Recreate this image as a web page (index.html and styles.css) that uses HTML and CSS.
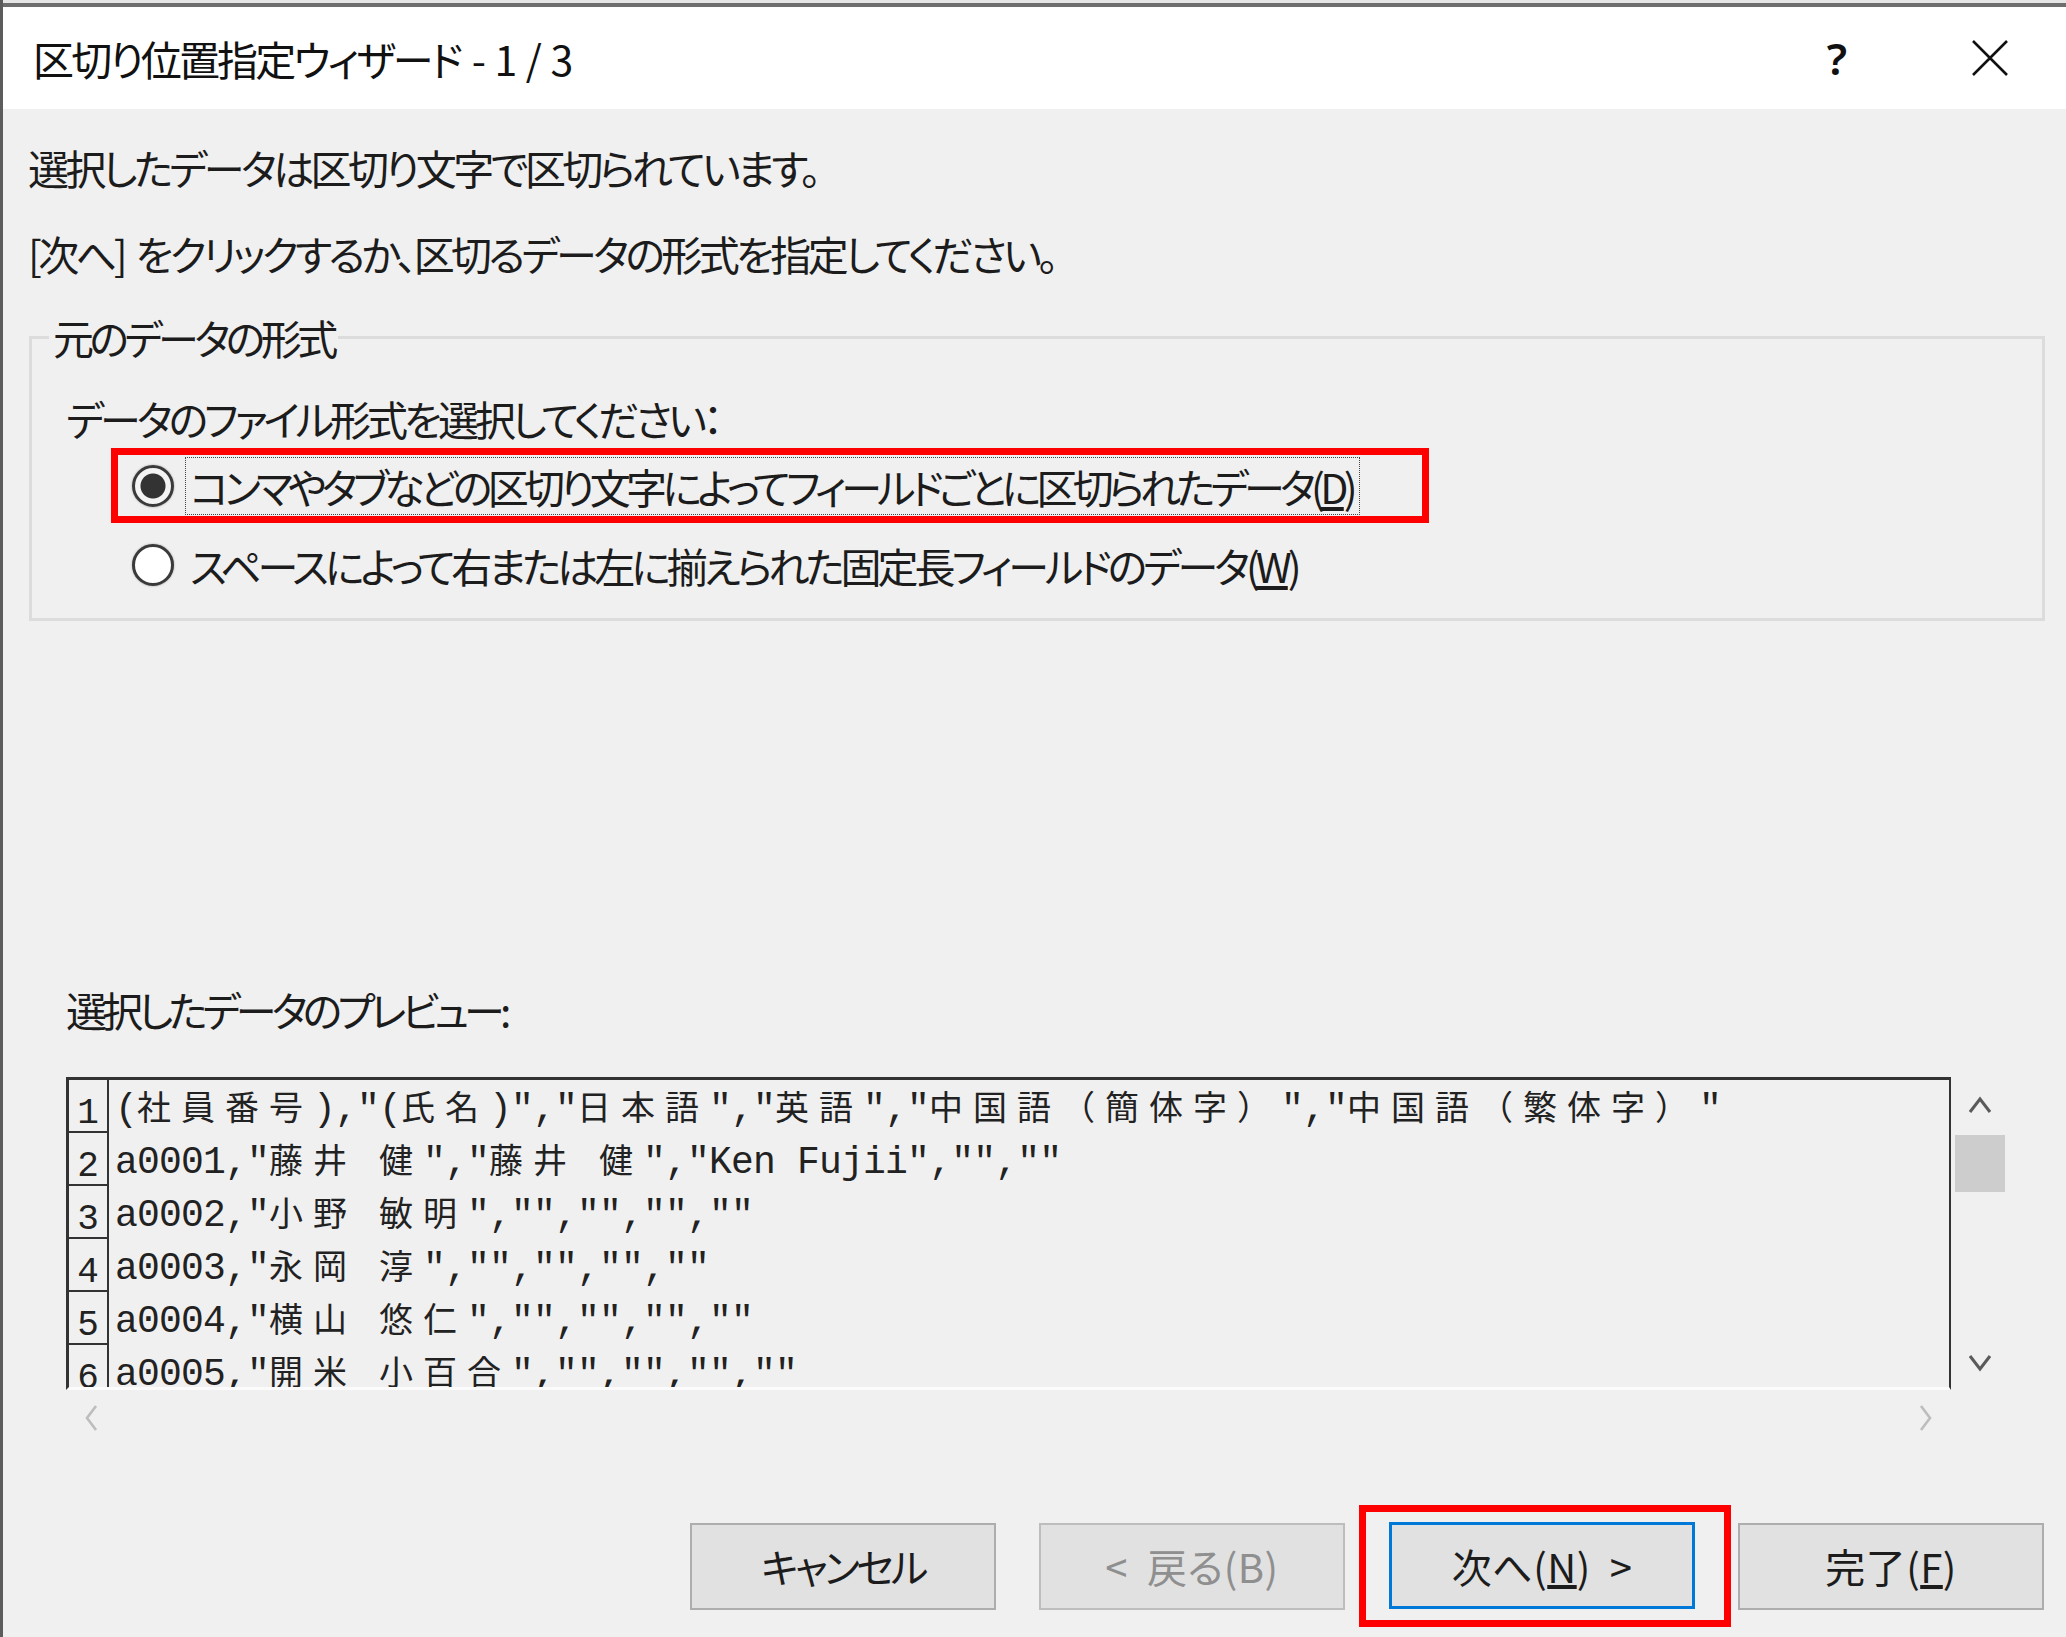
FILE: index.html
```html
<!DOCTYPE html>
<html lang="ja">
<head>
<meta charset="utf-8">
<title>区切り位置指定ウィザード - 1 / 3</title>
<link rel="stylesheet" href="styles.css">
</head>
<body>
<div class="window">
  <div class="excel-strip"></div>
  <header class="titlebar">
    <h1 class="title">区切り位置指定ウィザード - 1 / 3</h1>
    <div class="title-actions">
      <span class="help">?</span>
      <span class="close-btn">
        <svg width="38" height="38" viewBox="0 0 38 38"><path d="M2 2 L36 36 M36 2 L2 36" stroke="#111" stroke-width="2.6" fill="none"/></svg>
      </span>
    </div>
  </header>
  <main class="content">
    <p class="msg msg1">選択したデータは区切り文字で区切られています。</p>
    <p class="msg msg2">[次へ] をクリックするか、区切るデータの形式を指定してください。</p>
    <fieldset class="group">
      <legend class="legend">元のデータの形式</legend>
      <p class="prompt">データのファイル形式を選択してください：</p>
      <div class="option-row first">
        <span class="hl">
          <span class="radio checked"></span>
          <span class="focus-label">コンマやタブなどの区切り文字によってフィールドごとに区切られたデータ(<u>D</u>)</span>
        </span>
      </div>
      <div class="option-row second">
        <span class="radio"></span>
        <span class="opt-label">スペースによって右または左に揃えられた固定長フィールドのデータ(<u>W</u>)</span>
      </div>
    </fieldset>
    <p class="preview-label">選択したデータのプレビュー:</p>
    <div class="preview">
      <div class="grid">
        <div class="row"><span class="num">1</span><span class="text">(<span class="z">社員番号</span>),"(<span class="z">氏名</span>)","<span class="z">日本語</span>","<span class="z">英語</span>","<span class="z">中国語（簡体字）</span>","<span class="z">中国語（繁体字）</span>"</span></div>
        <div class="row"><span class="num">2</span><span class="text">a0001,"<span class="z">藤井</span> <span class="z">健</span>","<span class="z">藤井</span> <span class="z">健</span>","Ken Fujii","",""</span></div>
        <div class="row"><span class="num">3</span><span class="text">a0002,"<span class="z">小野</span> <span class="z">敏明</span>","","","",""</span></div>
        <div class="row"><span class="num">4</span><span class="text">a0003,"<span class="z">永岡</span> <span class="z">淳</span>","","","",""</span></div>
        <div class="row"><span class="num">5</span><span class="text">a0004,"<span class="z">横山</span> <span class="z">悠仁</span>","","","",""</span></div>
        <div class="row"><span class="num">6</span><span class="text">a0005,"<span class="z">開米</span> <span class="z">小百合</span>","","","",""</span></div>
      </div>
      <div class="vscroll">
        <span class="sb-btn"><svg width="24" height="18" viewBox="0 0 24 18"><path d="M2 16 L12 3 L22 16" fill="none" stroke="#5a5a5a" stroke-width="3"/></svg></span>
        <span class="thumb"></span>
        <span class="sb-space"></span>
        <span class="sb-btn"><svg width="24" height="18" viewBox="0 0 24 18"><path d="M2 2 L12 15 L22 2" fill="none" stroke="#5a5a5a" stroke-width="3"/></svg></span>
      </div>
    </div>
    <div class="hscroll">
      <svg width="16" height="28" viewBox="0 0 16 28"><path d="M13 2 L4 14 L13 26" fill="none" stroke="#bdbdbd" stroke-width="2.6"/></svg>
      <svg width="16" height="28" viewBox="0 0 16 28"><path d="M3 2 L12 14 L3 26" fill="none" stroke="#bdbdbd" stroke-width="2.6"/></svg>
    </div>
    <div class="buttons">
      <button type="button" class="btn btn-cancel">キャンセル</button>
      <button type="button" class="btn btn-back">&lt;&nbsp;&nbsp;戻る(B)</button>
      <span class="hl-btn"><button type="button" class="btn btn-next">次へ(<u>N</u>)&nbsp;&nbsp;&gt;</button></span>
      <button type="button" class="btn btn-finish">完了(<u>F</u>)</button>
    </div>
  </main>
</div>
</body>
</html>
```

FILE: styles.css
```css
* { box-sizing: border-box; }
html, body { margin: 0; padding: 0; }
body {
  width: 2066px;
  height: 1637px;
  overflow: hidden;
  background: #f0f0f0;
  font-family: "Noto Sans CJK JP", "Noto Sans", sans-serif;
  font-feature-settings: "palt";
  color: #1c1c1c;
}
.window {
  width: 2066px;
  height: 1637px;
  border-left: 3px solid #5c5c5c;
  display: flex;
  flex-direction: column;
  background: #f0f0f0;
}
.excel-strip {
  flex: none;
  height: 7px;
  background: linear-gradient(#e6e6e6 0 3px, #6e6e6e 3px 7px);
}
.titlebar {
  flex: none;
  height: 102px;
  background: #ffffff;
  display: flex;
  align-items: center;
}
.title {
  flex: 1;
  margin: 0 0 0 30px;
  font-size: 41px;
  font-weight: 400;
  line-height: 1;
  letter-spacing: -2.8px;
  word-spacing: 5px;
  color: #111;
}
.title-actions {
  display: flex;
  align-items: center;
  margin-right: 38px;
}
.help {
  width: 76px;
  text-align: center;
  font-family: "Noto Sans", "DejaVu Sans", sans-serif;
  font-size: 44px;
  font-weight: 600;
  line-height: 1;
  color: #111;
}
.close-btn {
  width: 76px;
  height: 76px;
  margin-left: 77px;
  display: flex;
  align-items: center;
  justify-content: center;
}
.content {
  flex: 1;
  display: flex;
  flex-direction: column;
  align-items: flex-start;
}
.msg {
  margin: 0 0 0 25px;
  font-size: 41px;
  line-height: 50px;
  letter-spacing: -3.6px;
}
.msg1 { margin-top: 33px; }
.msg2 { margin-top: 36px; word-spacing: 6px; }
.group {
  align-self: stretch;
  margin: 36px 21px 0 26px;
  border: 3px solid #dcdcdc;
  padding: 0 0 24px 0;
  min-width: 0;
}
.legend {
  margin-left: 17px;
  padding: 0 4px;
  font-size: 41px;
  line-height: 46px;
  letter-spacing: -4.5px;
}
.prompt {
  margin: 35px 0 0 34px;
  font-size: 41px;
  line-height: 46px;
  letter-spacing: -4px;
}
.option-row {
  display: flex;
  align-items: center;
  font-size: 41px;
  letter-spacing: -4px;
}
.option-row.first { margin: 7px 0 0 79px; }
.option-row.second { margin: 13px 0 0 100px; height: 58px; }
.hl {
  display: inline-flex;
  align-items: center;
  border: 7px solid #ff0000;
  padding: 2px 62px 1px 14px;
}
.radio {
  flex: none;
  width: 42px;
  height: 42px;
  border-radius: 50%;
  border: 3px solid #3a3a3a;
  background: #ffffff;
  box-shadow: 0 0 2px #9a9a9a;
}
.radio.checked {
  background: radial-gradient(circle, #333333 0 12px, #f4f4f4 13px);
}
.focus-label {
  margin-left: 11px;
  border: 1px dotted #444;
  padding: 0 6px 0 4px;
  line-height: 56px;
  letter-spacing: -4.7px;
}
.opt-label {
  margin-left: 16px;
  line-height: 58px;
}
.preview-label {
  margin: 365px 0 0 63px;
  font-size: 41px;
  line-height: 46px;
  letter-spacing: -4.8px;
}
.preview {
  display: flex;
  margin: 45px 0 0 63px;
  height: 313px;
}
.grid {
  width: 1885px;
  border-top: 3px solid #333;
  border-left: 3px solid #333;
  border-right: 2px solid #333;
  border-bottom: 3px solid #fbfbfb;
  overflow: hidden;
  display: flex;
  flex-direction: column;
}
.row {
  flex: none;
  display: flex;
  height: 53px;
}
.num {
  flex: none;
  width: 40px;
  border-right: 2px solid #333;
  border-bottom: 2px solid #333;
  display: flex;
  align-items: flex-end;
  justify-content: center;
  font-family: "Liberation Mono", monospace;
  font-size: 36px;
  line-height: 34px;
  color: #222;
}
.text {
  padding: 6px 0 0 6px;
  white-space: pre;
  font-family: "Liberation Mono", "Noto Sans Mono CJK JP", "Noto Sans CJK JP", monospace;
  font-feature-settings: normal;
  font-size: 38px;
  line-height: 40px;
  letter-spacing: -0.8px;
  color: #222;
}
.z {
  font-family: "Noto Sans Mono CJK JP", "Noto Sans CJK JP", monospace;
  font-size: 34px;
  letter-spacing: 10px;
}
.vscroll {
  width: 58px;
  display: flex;
  flex-direction: column;
  align-items: center;
}
.sb-btn {
  flex: none;
  width: 100%;
  height: 55px;
  display: flex;
  align-items: center;
  justify-content: center;
}
.thumb {
  flex: none;
  width: 50px;
  height: 57px;
  margin-top: 3px;
  background: #cdcdcd;
}
.sb-space { flex: 1; }
.hscroll {
  width: 1885px;
  height: 55px;
  margin-left: 63px;
  padding: 0 17px;
  display: flex;
  align-items: center;
  justify-content: space-between;
}
.buttons {
  align-self: stretch;
  height: 122px;
  margin-top: 60px;
  padding-right: 22px;
  display: flex;
  align-items: center;
  justify-content: flex-end;
}
.btn {
  width: 306px;
  height: 87px;
  margin: 0;
  padding: 0;
  background: #e1e1e1;
  border: 2px solid #adadad;
  font-family: inherit;
  font-feature-settings: "palt";
  font-size: 40px;
  letter-spacing: 0.5px;
  color: #1c1c1c;
  display: flex;
  align-items: center;
  justify-content: center;
}
.btn-cancel { margin-right: 43px; letter-spacing: -3.5px; }
.btn-back {
  margin-right: 14px;
  color: #8f8f8f;
  border-color: #bdbdbd;
}
.hl-btn {
  display: flex;
  border: 7px solid #ff0000;
  padding: 10px 29px 11px 23px;
  margin-right: 7px;
}
.btn-next { border: 3px solid #0078d7; }
```
